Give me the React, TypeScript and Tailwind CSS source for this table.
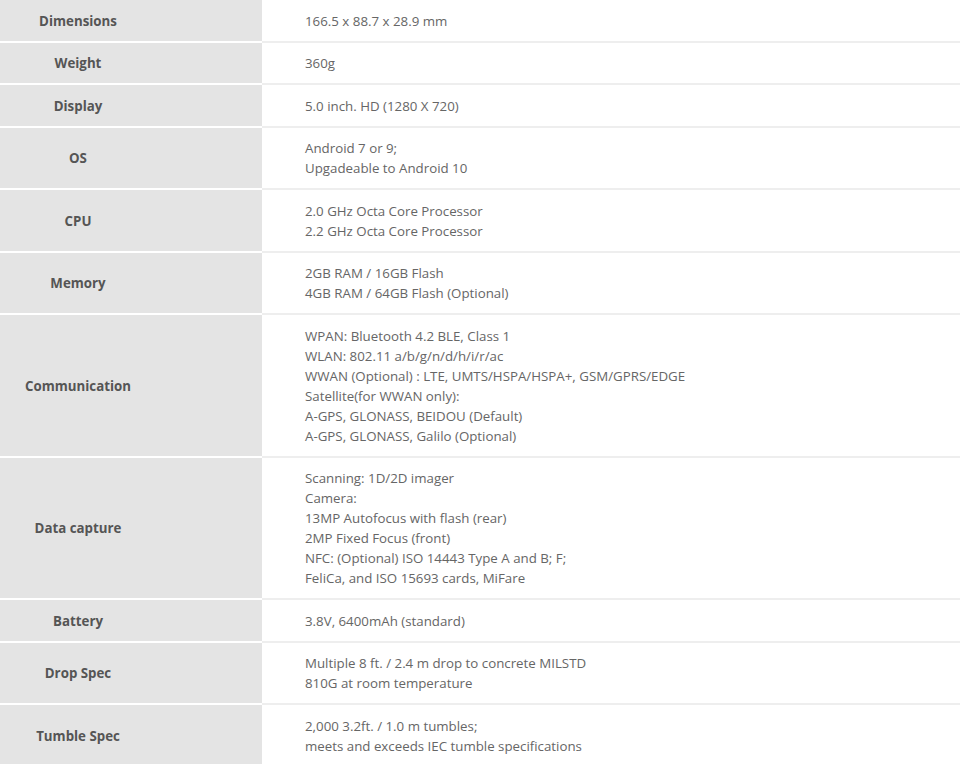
const specs: { label: string; lines: string[] }[] = [
  { label: "Dimensions", lines: ["166.5 x 88.7 x 28.9 mm"] },
  { label: "Weight", lines: ["360g"] },
  { label: "Display", lines: ["5.0 inch. HD (1280 X 720)"] },
  { label: "OS", lines: ["Android 7 or 9;", "Upgadeable to Android 10"] },
  { label: "CPU", lines: ["2.0 GHz Octa Core Processor", "2.2 GHz Octa Core Processor"] },
  { label: "Memory", lines: ["2GB RAM / 16GB Flash", "4GB RAM / 64GB Flash (Optional)"] },
  {
    label: "Communication",
    lines: [
      "WPAN: Bluetooth 4.2 BLE, Class 1",
      "WLAN: 802.11 a/b/g/n/d/h/i/r/ac",
      "WWAN (Optional) : LTE, UMTS/HSPA/HSPA+, GSM/GPRS/EDGE",
      "Satellite(for WWAN only):",
      "A-GPS, GLONASS, BEIDOU (Default)",
      "A-GPS, GLONASS, Galilo (Optional)",
    ],
  },
  {
    label: "Data capture",
    lines: [
      "Scanning: 1D/2D imager",
      "Camera:",
      "13MP Autofocus with flash (rear)",
      "2MP Fixed Focus (front)",
      "NFC: (Optional) ISO 14443 Type A and B; F;",
      "FeliCa, and ISO 15693 cards, MiFare",
    ],
  },
  { label: "Battery", lines: ["3.8V, 6400mAh (standard)"] },
  { label: "Drop Spec", lines: ["Multiple 8 ft. / 2.4 m drop to concrete MILSTD", "810G at room temperature"] },
  { label: "Tumble Spec", lines: ["2,000 3.2ft. / 1.0 m tumbles;", "meets and exceeds IEC tumble specifications"] },
];

export default function App() {
  return (
    <div className="min-h-screen bg-white font-['Open_Sans',sans-serif] text-[13.3px]">
      <div className="w-[960px] flex flex-col">
        {specs.map((row) => (
          <div key={row.label} className="flex">
            {/* label cell */}
            <div className="w-[262px] shrink-0 bg-[#e4e4e4] border-b-2 border-white flex items-center pt-[1px]">
              <div className="w-[156px] text-center font-bold text-[#555555] leading-[20px]">{row.label}</div>
            </div>
            {/* value cell */}
            <div className="flex-1 border-b-2 border-[#eeeeee] pl-[43px] pt-[10.75px] pb-[9.75px] text-[#666666] leading-[20px]">
              {row.lines.map((line, i) => (
                <div key={i}>{line}</div>
              ))}
            </div>
          </div>
        ))}
      </div>
    </div>
  );
}
